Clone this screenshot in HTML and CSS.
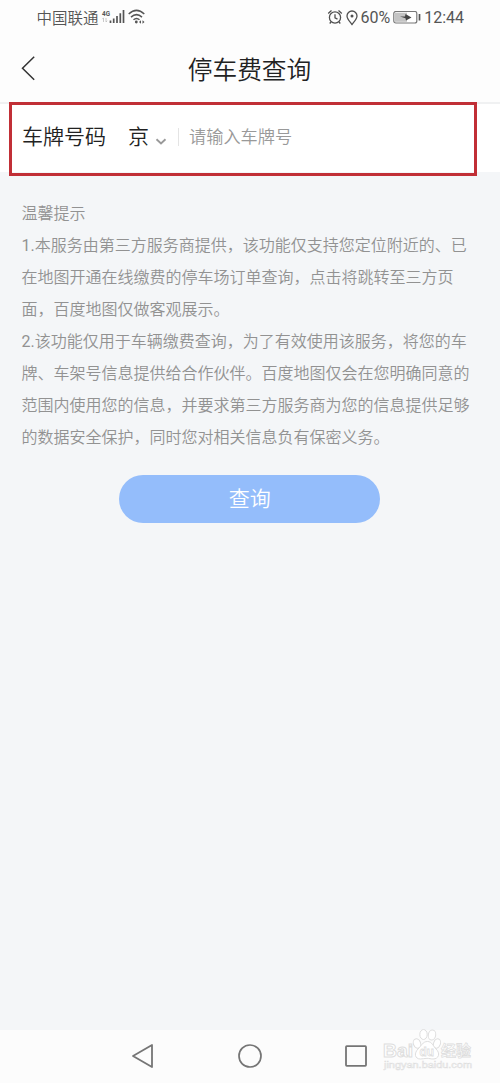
FILE: index.html
```html
<!DOCTYPE html>
<html lang="zh-CN">
<head>
<meta charset="utf-8">
<title>停车费查询</title>
<link rel="stylesheet" href="styles.css">
</head>
<body>
<div class="screen">
  <div class="status">
    <span class="carrier">中国联通</span>
    <svg class="signal" width="48" height="20" viewBox="0 0 48 20">
      <text class="net" x="2" y="8.5" textLength="8" lengthAdjust="spacingAndGlyphs">4G</text>
      <path d="M3.5 11v4M2.3 12.2l1.2-1.4M6 11v4l1.2-1.2" fill="none" stroke="#bbb" stroke-width=".8"/>
      <path d="M10.500 13.500v2.500M13.700 11.500v4.500M17 9v7M20.300 6.300v9.700M23.500 3v13" fill="none" stroke="#555" stroke-width="1.700"/>
      <path d="M28.700 7Q36.500-.3 44.300 7M31 10.100Q36.500 5.100 42 10.100M33.500 12.800Q36.500 10.200 39.500 12.800" fill="none" stroke="#555" stroke-width="1.500"/>
      <circle cx="36.300" cy="15" r="1.400" fill="#555"/>
      <path d="M39 15l2-1.700v3.400zM44.500 15l-2-1.700v3.400z" fill="#555"/>
    </svg>
    <div class="right">
      <svg width="16" height="16" viewBox="0 0 16 16" fill="none" stroke="#505050" stroke-width="1.300">
        <circle cx="8" cy="7.500" r="5.600"/><path d="M8 4.200v3.600l2.500 1.300M1.200 3.500L4.500 .6M14.800 3.500L11.500 .6M4 12l-1.300 1.500M12 12l1.300 1.500"/>
      </svg>
      <svg class="pin" width="12" height="16" viewBox="0 0 12 16">
        <path d="M6 14.500C4 11.700 1 9 1 6a5 5 0 0 1 10 0c0 3-3 5.700-5 8.500z" fill="none" stroke="#505050" stroke-width="1.300"/><circle cx="6" cy="6" r="1.500" fill="#505050"/>
      </svg>
      <span class="percent">60%</span>
      <svg class="battery" width="28" height="14" viewBox="0 0 28 14">
        <rect x=".8" y=".5" width="23" height="11.500" rx="2" fill="#fff" stroke="#777" stroke-width="1.200"/>
        <rect x="2" y="1.700" width="12" height="9.100" fill="#c4c4c4"/>
        <path d="M7 5.500l5 .1.500-2.600L18.500 6.500 13 9.500l-.5-2.200z" fill="#444"/>
        <path d="M26.500 3v6.500" stroke="#555" stroke-width="1.700"/>
      </svg>
      <span class="time">12:44</span>
    </div>
  </div>
  <div class="header">
    <svg class="back" width="16" height="26" viewBox="0 0 16 26"><path d="M13.200 1.800L1.500 13.300l11.700 11.500" fill="none" stroke="#333" stroke-width="1.500"/></svg>
    <h1 class="title">停车费查询</h1>
  </div>
  <div class="plate">
    <span class="label">车牌号码</span>
    <span class="province">京</span>
    <svg class="caret" width="12" height="8" viewBox="0 0 12 8"><path d="M1.500 1.300L6 5.500l4.500-4.200" fill="none" stroke="#999" stroke-width="1.900"/></svg>
    <span class="divider"></span>
    <span class="hint">请输入车牌号</span>
    <div class="highlight"></div>
  </div>
  <div class="content">
    <div class="tips">
      <p>温馨提示</p>
      <p><span class="num">1.</span>本服务由第三方服务商提供，该功能仅支持您定位附近的、已<br>在地图开通在线缴费的停车场订单查询，点击将跳转至三方页<br>面，百度地图仅做客观展示。</p>
      <p><span class="num">2.</span>该功能仅用于车辆缴费查询，为了有效使用该服务，将您的车<br>牌、车架号信息提供给合作伙伴。百度地图仅会在您明确同意的<br>范围内使用您的信息，并要求第三方服务商为您的信息提供足够<br>的数据安全保护，同时您对相关信息负有保密义务。</p>
    </div>
    <button class="submit">查询</button>
  </div>
  <div class="nav">
    <svg width="24" height="26" viewBox="0 0 24 26"><path d="M21 2v22L2 13z" fill="none" stroke="#757575" stroke-width="1.800" stroke-linejoin="round"/></svg>
    <svg width="26" height="26" viewBox="0 0 26 26"><circle cx="13" cy="13" r="11" fill="none" stroke="#757575" stroke-width="1.700"/></svg>
    <svg width="24" height="26" viewBox="0 0 24 26"><rect x="1" y="3.200" width="20" height="19.600" rx=".8" fill="none" stroke="#757575" stroke-width="1.800"/></svg>
    <svg class="watermark" width="100" height="48" viewBox="0 0 100 48">
      <g fill="#fff" stroke="#dedede" stroke-width="1">
        <ellipse cx="36" cy="18.500" rx="3.600" ry="4.800" transform="rotate(-20 36 18.500)"/>
        <ellipse cx="42.500" cy="9.500" rx="3.700" ry="5"/>
        <ellipse cx="51" cy="10" rx="3.700" ry="5" transform="rotate(10 51 10)"/>
        <ellipse cx="56" cy="18.500" rx="3.400" ry="4.800" transform="rotate(20 56 18.500)"/>
        <path d="M46.500 16.500c4.500 0 5.500 4.500 8.500 7.500 4.500 4 3 10-3 10-2.500 0-3.500-.7-6-.7s-4 .7-6.500.7c-6 0-6.500-6-2.500-10 3.500-3 4.500-7.500 9.500-7.500z"/>
        <text class="brand" x="2" y="31.500" textLength="30" lengthAdjust="spacingAndGlyphs">Bai</text>
        <text class="paw" x="38.500" y="31" textLength="14.500" lengthAdjust="spacingAndGlyphs">du</text>
        <text class="cn" x="60" y="31" textLength="30" lengthAdjust="spacingAndGlyphs">经验</text>
        <text class="url" x="3" y="43" textLength="88" lengthAdjust="spacingAndGlyphs">jingyan.baidu.com</text>
      </g>
    </svg>
  </div>
</div>
</body>
</html>
```
FILE: styles.css
```css
* { box-sizing: border-box; }
body { margin: 0; font-family: "Noto Sans CJK SC", sans-serif; background: #f4f6f8; }
.screen { width: 500px; height: 1083px; display: flex; flex-direction: column; }
.status { height: 36px; padding: 0 36px 3px 36.5px; display: flex; align-items: center; background: #fdfdfd; color: #555; font-size: 15.5px; }
.carrier { line-height: 20px; font-weight: 350; }
.signal { margin-left: 1.5px; }
.right { margin-left: auto; padding-top: 2px; display: flex; align-items: center; font-family: Roboto, sans-serif; font-size: 16px; line-height: 20px; }
.pin { margin: 0 2px 0 3px; }
.battery { margin: 0 3px; }
.net { font: bold 8px Roboto, sans-serif; fill: #555; }
.header { height: 66px; padding: 0 22px 2px 21px; display: grid; grid-template-columns: 16px 1fr 16px; align-items: center; background: #fdfdfd; }
.title { margin: 0; text-align: center; font-size: 24.7px; font-weight: 350; line-height: 36px; color: #222; }
.plate { position: relative; height: 70px; padding: 0 22px 7px; display: flex; align-items: center; background: #fff; border-top: 2px solid #f0f1f2; color: #222; font-size: 21px; font-weight: 350; line-height: 32px; }
.province { margin-left: 22px; }
.caret { margin: 15px 0 0 6px; }
.divider { width: 1px; height: 18px; margin: 4px 10px 0 11px; background: #e4e4e4; }
.hint { padding-top: 2px; font-size: 17.2px; color: #999; }
.highlight { position: absolute; left: 9px; top: -2px; width: 468px; height: 74px; border: 3px solid #c12f36; }
.content { flex: 1; padding: 24px 22px 25px 21.500px; display: flex; flex-direction: column; align-items: center; background: #f4f6f8; }
.tips { align-self: stretch; font-size: 16px; font-weight: 350; line-height: 32px; color: #929292; white-space: nowrap; }
.tips p { margin: 0; }
.num { font-family: Roboto, sans-serif; font-weight: 400; line-height: 1; }
.submit { width: 261px; height: 48px; margin-top: 23px; padding: 0 0 4px; border: 0; border-radius: 24px; background: #94bdfb; color: #fff; font: 350 21px/32px "Noto Sans CJK SC", sans-serif; }
.nav { position: relative; height: 53px; padding-bottom: 1px; display: flex; justify-content: center; align-items: center; gap: 82px; background: #fcfcfc; }
.watermark { position: absolute; left: 381px; top: -5px; }
.brand { font: bold 19px "Liberation Sans", sans-serif; }
.paw { font: bold 13px "Liberation Sans", sans-serif; stroke-width: .8; }
.cn { font: bold 15px "Noto Sans CJK SC", sans-serif; stroke-width: .8; }
.url { font: 9px "Liberation Sans", sans-serif; stroke-width: .5; }
```
